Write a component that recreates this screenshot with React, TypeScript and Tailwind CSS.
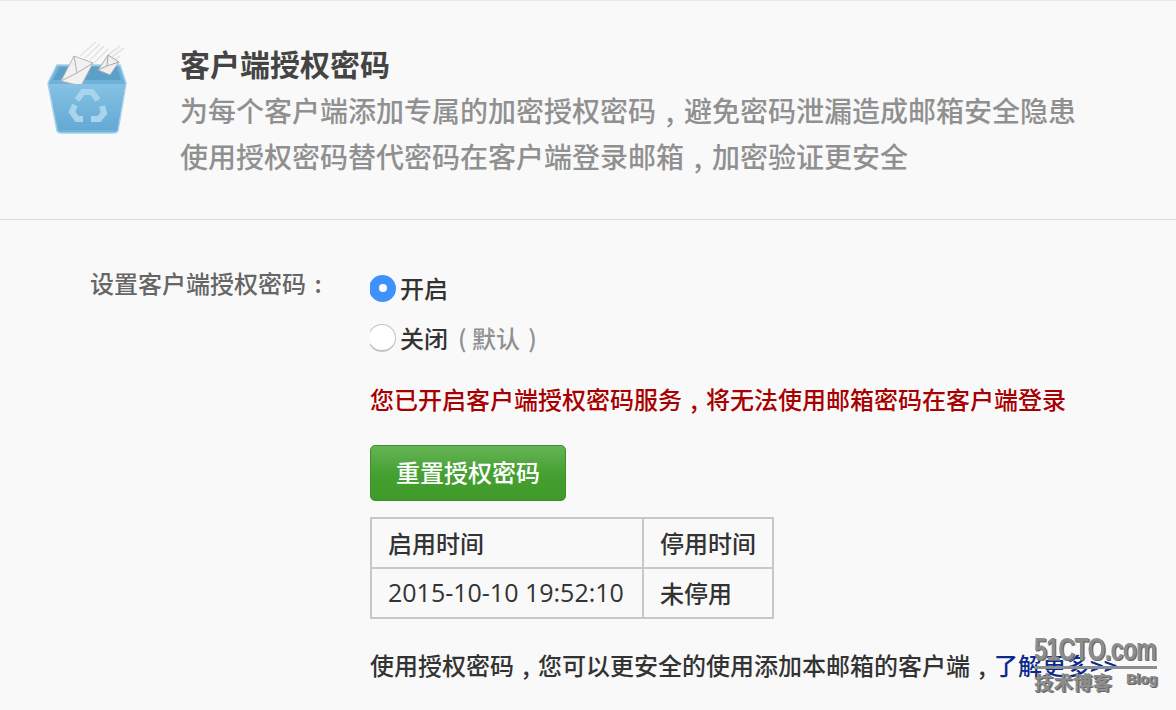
import React from 'react'

const cjk = { fontFamily: '"Noto Sans CJK SC", "Liberation Sans", sans-serif' }

// centred full-width comma, as in the screenshot
const Comma = () => <span className="inline-block w-[1em] text-center font-medium">,</span>

const BinIcon = () => (
  <svg width="85" height="95" viewBox="45 40 85 95" className="blur-[0.7px]">
    <defs>
      <linearGradient id="bin" x1="0" y1="0" x2="0" y2="1">
        <stop offset="0" stopColor="#86c2e4" />
        <stop offset="1" stopColor="#63a9d4" />
      </linearGradient>
    </defs>
    <g stroke="#e2e2e2" strokeWidth="1.6" opacity="0.9" fill="none">
      <path d="M80 56 L96 42 M85 58 L100 44 M90 60 L104 46 M94 63 L108 49" />
      <path d="M108 55 L120 46 M112 57 L124 48 M116 59 L120 56" />
    </g>
    <path d="M57 65 H120 L126 83 L118 131 Q117 133 114 133 H61 Q58 133 57 131 L48 83 Z" fill="#6eb1d9" stroke="#a5d1ea" strokeWidth="1.5" />
    <path d="M60 67 H117 L121 80 H53 Z" fill="#5c9fc8" />
    <path d="M61 81 L74 56 L93 63 L81 86 Z" fill="#f1f1f1" stroke="#b4b4b4" strokeWidth="1" />
    <path d="M74 56 L77 73 L61 81 M93 63 L77 73" fill="none" stroke="#b0b0b0" strokeWidth="1" />
    <path d="M98 70 L108 55 L119 62 L110 75 Z" fill="#efefef" stroke="#a8a8a8" strokeWidth="1" />
    <path d="M108 55 L107 66 L98 70 M119 62 L107 66" fill="none" stroke="#a8a8a8" strokeWidth="1" />
    <path d="M49 84 H125 L117 130 H59 Z" fill="url(#bin)" />
    <g fill="none" stroke="#a9d5ec" strokeWidth="6">
      <path d="M77 100 L83 92 H92 L98 100" />
      <path d="M102 106 L104 113 L99 119 H91" />
      <path d="M83 119 H77 L72 112 L75 105" />
    </g>
  </svg>
)

const Watermark = () => (
  <div className="absolute left-[1034px] top-[634px] w-[126px] text-[#8d8d8d] [text-shadow:1px_1px_0_#6a6a6a,2px_1px_0_#8d8d8d]">
    <div className="font-['Liberation_Sans'] font-bold text-[31px] leading-[32px] tracking-[-1px] scale-x-[0.75] origin-left whitespace-nowrap">
      51CTO.com
    </div>
    <div className="h-[3px] bg-[#8d8d8d] w-[123px]" />
    <div className="flex items-start justify-between w-[123px] mt-[1px]">
      <span style={cjk} className="font-bold text-[19px] leading-[24px] tracking-[0.5px]">技术博客</span>
      <span className="font-['Liberation_Sans'] font-bold text-[14px] leading-[18px]">Blog</span>
    </div>
  </div>
)

const Radio = ({ checked }: { checked?: boolean }) => (
  <span className="w-[26px] h-[28px] overflow-hidden flex items-center shrink-0">
    {checked ? (
      <span className="w-[27px] h-[27px] -ml-[1px] shrink-0 rounded-full bg-[#3f92fb] flex items-center justify-center">
        <span className="w-[8px] h-[8px] rounded-full bg-white" />
      </span>
    ) : (
      <span className="w-[28px] h-[28px] -ml-[2px] shrink-0 rounded-full bg-white border border-[#c4c4c4] border-b-2" />
    )}
  </span>
)

export default function App() {
  return (
    <div style={cjk} className="w-[1176px] h-[710px] overflow-hidden relative bg-[#f9f9f9] text-[#333] font-medium">
      <div className="h-[220px] border-t border-[#e6e6e6] border-b border-b-[#dcdcdc] flex">
        <div className="w-[180px] shrink-0 pl-[45px] pt-[39px]">
          <BinIcon />
        </div>
        <div className="pt-[43px]">
          <h1 className="text-[30px] font-bold leading-[38px] text-[#444]">客户端授权密码</h1>
          <p className="text-[28px] leading-[46px] text-[#909090] mt-[5px] whitespace-nowrap">
            为每个客户端添加专属的加密授权密码<Comma />避免密码泄漏造成邮箱安全隐患
          </p>
          <p className="text-[28px] leading-[46px] text-[#909090] whitespace-nowrap">
            使用授权密码替代密码在客户端登录邮箱<Comma />加密验证更安全
          </p>
        </div>
      </div>

      <div className="flex pl-[90px] pt-[46px]">
        <div className="w-[280px] shrink-0 text-[24px] leading-[36px] text-[#666] -mt-[1px] whitespace-nowrap">
          设置客户端授权密码<span className="inline-block w-[1em] text-center">:</span>
        </div>
        <div className="flex-1">
          <div className="flex items-center h-[36px] mt-[4px] text-[24px] text-[#333] gap-[4px]">
            <Radio checked />
            <span>开启</span>
          </div>
          <div className="flex items-center h-[36px] mt-[14px] text-[24px] text-[#333] gap-[4px]">
            <Radio />
            <span>关闭</span>
            <span className="text-[#909090] ml-[6px] whitespace-pre">( 默认<span className="ml-[3px]"> )</span></span>
          </div>
          <p className="text-[24px] leading-[36px] mt-[25px] text-[#a80000] whitespace-nowrap">
            您已开启客户端授权密码服务<Comma />将无法使用邮箱密码在客户端登录
          </p>
          <button className="mt-[28px] block w-[196px] h-[56px] pb-[2px] rounded-[5px] border border-[#3d8f2a] bg-gradient-to-b from-[#66b555] via-[#46a032] to-[#3f9a28] text-white text-[24px] leading-none">
            重置授权密码
          </button>
          <table className="mt-[16px] border-collapse text-[24px] text-[#333]">
            <tbody>
              <tr className="h-[50px]">
                <td className="border-2 border-[#c8c8c8] w-[272px] pl-[16px]">启用时间</td>
                <td className="border-2 border-[#c8c8c8] w-[130px] pl-[16px]">停用时间</td>
              </tr>
              <tr className="h-[50px]">
                <td className="border-2 border-[#c8c8c8] pl-[16px] font-['Open_Sans'] font-medium text-[25px] whitespace-nowrap">2015-10-10 19:52:10</td>
                <td className="border-2 border-[#c8c8c8] pl-[16px]">未停用</td>
              </tr>
            </tbody>
          </table>
          <p className="text-[24px] leading-[36px] mt-[28px] text-[#333] whitespace-nowrap">
            使用授权密码<Comma />您可以更安全的使用添加本邮箱的客户端<Comma />
            <a className="text-[#0a2a8c]">了解更多&gt;&gt;</a>
          </p>
        </div>
      </div>
      <Watermark />
    </div>
  )
}
